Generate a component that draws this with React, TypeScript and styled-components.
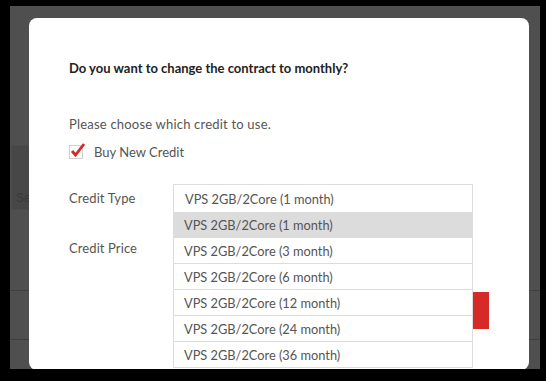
import React from "react";
import styled, { createGlobalStyle } from "styled-components";

const GlobalStyle = createGlobalStyle`
  html, body { margin: 0; padding: 0; background: #000; }
  body { font-family: "Lato", "Liberation Sans", sans-serif; }
`;

const Frame = styled.div`
  width: 546px;
  height: 381px;
  background: #000;
  padding: 6px 6px 0 10px;
  box-sizing: border-box;
  overflow: hidden;
`;

const Screen = styled.div`
  position: relative;
  width: 530px;
  height: 363px;
  background: #4f4f4f;
  overflow: hidden;
`;

const BackPage = styled.div`
  display: flex;
  flex-direction: column;
  padding-top: 139px;
`;

const BackHeader = styled.div`
  margin-left: 1px;
  width: 200px;
  height: 65px;
  background: #474747;
  border: 1px solid #4b4b4b;
  box-sizing: border-box;
  display: flex;
  align-items: flex-end;
  padding: 0 0 4px 4px;
  font-family: "Liberation Sans", sans-serif;
  font-size: 12px;
  color: #3a3a3a;
`;

const BackRow = styled.div<{ $h: number }>`
  height: ${(p) => p.$h}px;
  border-bottom: 1px solid #3f3f3f;
  box-sizing: border-box;
`;

const Modal = styled.div`
  position: absolute;
  left: 19px;
  top: 12px;
  width: 500px;
  height: 352px;
  background: #fff;
  border-radius: 8px;
  box-sizing: border-box;
  padding: 42px 40px 0 40px;
  display: flex;
  flex-direction: column;
`;

const Title = styled.div`
  font-weight: 700;
  font-size: 13px;
  line-height: 16px;
  color: #222;
`;

const Text = styled.div`
  margin-top: 40px;
  font-size: 13px;
  letter-spacing: 0.2px;
  line-height: 16px;
  color: #555;
`;

const CheckRow = styled.label`
  margin-top: 12px;
  display: flex;
  align-items: center;
  gap: 11px;
  font-size: 13px;
  line-height: 16px;
  color: #555;
`;

const Box = styled.span`
  position: relative;
  width: 14px;
  height: 14px;
  border: 1px solid #d0d0d0;
  box-sizing: border-box;
  flex: none;
`;

const Check = styled.svg`
  position: absolute;
  left: 1px;
  top: -4px;
  overflow: visible;
`;

const FieldRow = styled.div<{ $mt: number }>`
  margin-top: ${(p) => p.$mt}px;
  display: flex;
  align-items: center;
`;

const Label = styled.div`
  width: 104px;
  font-size: 13px;
  letter-spacing: 0.1px;
  line-height: 16px;
  color: #555;
`;

const SelectWrap = styled.div`
  position: relative;
  width: 300px;
  z-index: 2;
`;

const SelectBox = styled.div`
  height: 28px;
  border: 1px solid #dcdcdc;
  border-bottom: none;
  box-sizing: border-box;
  padding: 0 11px;
  display: flex;
  align-items: center;
  font-size: 12.8px;
  color: #555;
  background: #fff;
`;

const Options = styled.div`
  position: absolute;
  left: 0;
  top: 100%;
  width: 300px;
  border-left: 1px solid #dcdcdc;
  border-right: 1px solid #dcdcdc;
  box-sizing: border-box;
  background: #fff;
`;

const Option = styled.div<{ $active?: boolean }>`
  height: 26px;
  padding: 0 10px;
  display: flex;
  align-items: center;
  font-size: 12.8px;
  color: #555;
  box-sizing: border-box;
  background: ${(p) => (p.$active ? "#dcdcdc" : "#fff")};
  border-bottom: 1px solid #dcdcdc;
`;

const PriceValue = styled.div`
  height: 28px;
`;

const Footer = styled.div`
  margin-top: 30px;
  display: flex;
  justify-content: flex-end;
`;

const Button = styled.button`
  width: 100px;
  height: 37px;
  border: none;
  background: #d62a27;
  color: #fff;
  font-family: inherit;
  font-size: 12px;
`;

const options = [
  "VPS 2GB/2Core (1 month)",
  "VPS 2GB/2Core (3 month)",
  "VPS 2GB/2Core (6 month)",
  "VPS 2GB/2Core (12 month)",
  "VPS 2GB/2Core (24 month)",
  "VPS 2GB/2Core (36 month)",
];

export default function App() {
  return (
    <>
      <GlobalStyle />
      <Frame>
        <Screen>
          <BackPage>
            <BackHeader>Search</BackHeader>
            <BackRow $h={81} />
            <BackRow $h={49} />
          </BackPage>
          <Modal>
            <Title>Do you want to change the contract to monthly?</Title>
            <Text>Please choose which credit to use.</Text>
            <CheckRow>
              <Box>
                <Check width="16" height="16" viewBox="0 0 16 16">
                  <path
                    d="M1 9 L4.5 13 L13 2"
                    fill="none"
                    stroke="#d62a27"
                    strokeWidth="2.8"
                    strokeLinecap="butt"
                    strokeLinejoin="miter"
                  />
                </Check>
              </Box>
              Buy New Credit
            </CheckRow>
            <FieldRow $mt={24}>
              <Label>Credit Type</Label>
              <SelectWrap>
                <SelectBox>VPS 2GB/2Core (1 month)</SelectBox>
                <Options>
                  {options.map((o, i) => (
                    <Option key={o} $active={i === 0}>
                      {o}
                    </Option>
                  ))}
                </Options>
              </SelectWrap>
            </FieldRow>
            <FieldRow $mt={22}>
              <Label>Credit Price</Label>
              <PriceValue />
            </FieldRow>
            <Footer>
              <Button>Confirm</Button>
            </Footer>
          </Modal>
        </Screen>
      </Frame>
    </>
  );
}
